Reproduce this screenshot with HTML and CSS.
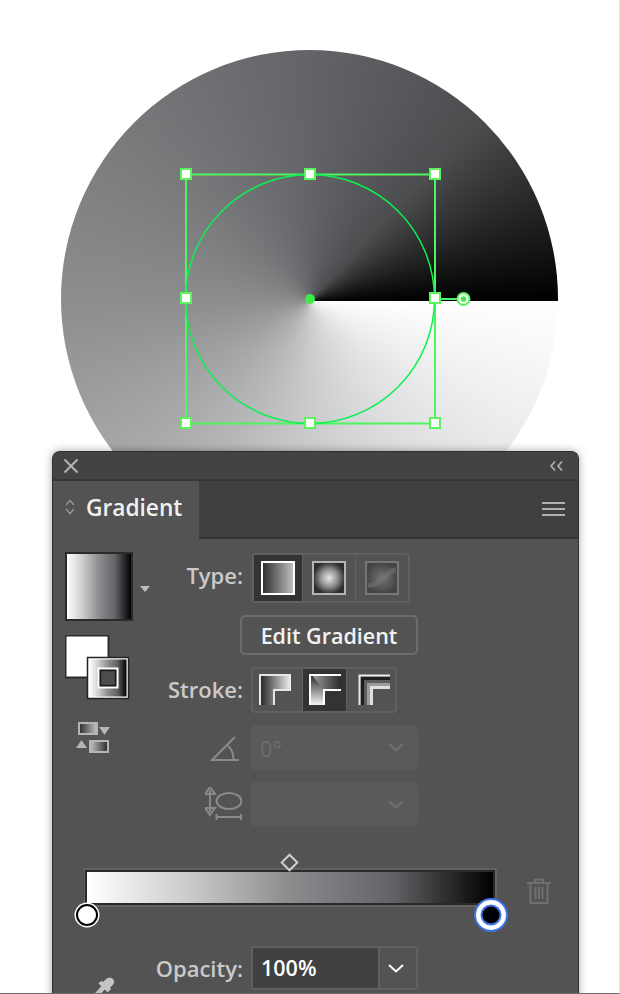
FILE: index.html
```html
<!DOCTYPE html>
<html lang="en">
<head>
  <meta charset="UTF-8" />
  <title>Gradient panel</title>
  <link rel="stylesheet" href="styles.css">
</head>
<body>
<div class="page">

  <!-- Artwork with the selected circle -->
  <div class="artboard">
    <div class="disc"></div>
    <svg class="selection" width="620" height="451" viewBox="0 0 620 451">
      <rect x="186" y="174.500" width="249" height="249" fill="none" stroke="#4ff55f" stroke-width="2"/>
      <circle cx="310" cy="299" r="124.500" fill="none" stroke="#0cf050" stroke-width="1.500"/>
      <line x1="435" y1="299" x2="458" y2="299" stroke="#4ff55f" stroke-width="2"/>
      <g fill="#fff" stroke="#5cf35c" stroke-width="2">
        <rect x="181" y="169" width="10" height="10"/>
        <rect x="305" y="169" width="10" height="10"/>
        <rect x="430" y="169" width="10" height="10"/>
        <rect x="181" y="293" width="10" height="10"/>
        <rect x="430" y="293" width="10" height="10"/>
        <rect x="181" y="418" width="10" height="10"/>
        <rect x="305" y="418" width="10" height="10"/>
        <rect x="430" y="418" width="10" height="10"/>
        <circle cx="463.500" cy="299" r="6"/>
      </g>
      <circle cx="463.500" cy="299" r="2.800" fill="#3fea4a"/>
      <circle cx="310" cy="299" r="5" fill="#3fea4a"/>
    </svg>
  </div>

  <svg class="defs" width="0" height="0">
    <defs>
      <linearGradient id="ramp" x1="0" x2="1" y1="0" y2="0">
        <stop offset="0" stop-color="#fff"/>
        <stop offset=".25" stop-color="#c9cbcd"/>
        <stop offset=".5" stop-color="#8b8c8e"/>
        <stop offset=".75" stop-color="#636467"/>
        <stop offset="1" stop-color="#000"/>
      </linearGradient>
      <linearGradient id="typeLinear" x1="0" x2="1" y1="0" y2="0">
        <stop offset="0" stop-color="#2a2a2a"/>
        <stop offset="1" stop-color="#c4c4c4"/>
      </linearGradient>
      <linearGradient id="typeLinearBack" x1="1" x2="0" y1="0" y2="0">
        <stop offset="0" stop-color="#2a2a2a"/>
        <stop offset="1" stop-color="#c4c4c4"/>
      </linearGradient>
      <radialGradient id="typeRadial">
        <stop offset="0" stop-color="#e8e8e8"/>
        <stop offset=".55" stop-color="#8f8f8f"/>
        <stop offset="1" stop-color="#2e2e2e"/>
      </radialGradient>
      <radialGradient id="typeFree">
        <stop offset="0" stop-color="#747474"/>
        <stop offset="1" stop-color="#444"/>
      </radialGradient>
      <linearGradient id="acrossX" gradientUnits="userSpaceOnUse" x1="0" x2="32" y1="0" y2="0">
        <stop offset="0" stop-color="#1c1c1c"/>
        <stop offset="1" stop-color="#f2f2f2"/>
      </linearGradient>
      <linearGradient id="alongY" gradientUnits="userSpaceOnUse" x1="0" x2="0" y1="0" y2="31">
        <stop offset="0" stop-color="#222"/>
        <stop offset="1" stop-color="#f4f4f4"/>
      </linearGradient>
      <linearGradient id="alongX" gradientUnits="userSpaceOnUse" x1="4" x2="32" y1="0" y2="0">
        <stop offset="0" stop-color="#999"/>
        <stop offset="1" stop-color="#2a2a2a"/>
      </linearGradient>
    </defs>
  </svg>

  <section class="panel">
    <div class="titlebar">
      <svg class="icon-close" width="16" height="16" viewBox="0 0 16 16"><path d="M1.500 1.500 14.500 14.500M14.500 1.500 1.500 14.500"/></svg>
      <svg class="icon-collapse" width="13" height="10" viewBox="0 0 13 10"><path d="M5 .5 1 5l4 4.500M12 .5 8 5l4 4.500"/></svg>
    </div>

    <div class="tabrow">
      <div class="tab">
        <svg class="icon-updown" width="10" height="16" viewBox="0 0 10 16"><path d="M1 6 5 1.500 9 6M1 10l4 4.500L9 10"/></svg>
        <span>Gradient</span>
      </div>
      <div class="tabrow-rest">
        <svg class="icon-menu" width="23" height="16" viewBox="0 0 23 16"><path d="M0 2h23M0 8h23M0 14h23"/></svg>
      </div>
    </div>

    <div class="panel-body">
      <div class="tools">
        <div class="swatches">
          <div class="swatch-row">
            <div class="swatch"></div>
            <div class="caret"></div>
          </div>

          <svg class="fillstroke" width="65" height="65" viewBox="0 0 65 65">
            <rect x=".5" y=".5" width="43" height="42" fill="#fff" stroke="#2d2d2d" stroke-width="2"/>
            <rect x="22.500" y="22.500" width="41" height="41" fill="#fff" stroke="#222" stroke-width="1.500"/>
            <rect x="24.500" y="24.500" width="37" height="37" fill="url(#ramp)"/>
            <rect x="33.500" y="33.500" width="19" height="19" fill="#4d4d4d" stroke="#fff" stroke-width="2"/>
            <rect x="35.500" y="35.500" width="15" height="15" fill="#4d4d4d" stroke="#1c1c1c" stroke-width="1.500"/>
          </svg>

          <svg class="swap" width="35" height="32" viewBox="0 0 35 32">
            <rect x="3" y="1" width="18" height="11" fill="url(#typeLinear)" stroke="#b5b5b5" stroke-width="2"/>
            <rect x="14" y="19" width="18" height="11" fill="url(#typeLinearBack)" stroke="#b5b5b5" stroke-width="2"/>
            <path d="M23 5h11l-5.500 8zM0 26l5.500-8 5.500 8z" fill="#b5b5b5"/>
          </svg>
        </div>

        <div class="controls">
          <label class="field-label type-label">Type:</label>
          <div class="btn-group type-group">
            <div class="cell active">
              <svg width="34" height="34" viewBox="0 0 34 34"><rect x="1" y="1" width="32" height="32" fill="url(#typeLinear)" stroke="#fff" stroke-width="2"/></svg>
            </div>
            <div class="cell">
              <svg width="34" height="34" viewBox="0 0 34 34"><rect x="1" y="1" width="32" height="32" fill="url(#typeRadial)" stroke="#b4b4b4" stroke-width="2"/></svg>
            </div>
            <div class="cell">
              <svg width="34" height="34" viewBox="0 0 34 34">
                <rect x="1" y="1" width="32" height="32" fill="url(#typeFree)" stroke="#777" stroke-width="2"/>
                <path d="M3 24C10 26 13 19 18 17 23 15 24 9 31 9" fill="none" stroke="#7c7c7c" stroke-width="5" opacity=".45"/>
              </svg>
            </div>
          </div>

          <span></span>
          <button class="edit-btn" type="button">Edit Gradient</button>

          <label class="field-label stroke-label">Stroke:</label>
          <div class="btn-group stroke-group">
            <div class="cell">
              <svg width="32" height="32" viewBox="0 0 32 32">
                <path d="M0 0H32V16H15V31H0Z" fill="url(#acrossX)"/>
                <path d="M1 31V1H32M15 31V16H32" fill="none" stroke="#e6e6e6" stroke-width="2"/>
              </svg>
            </div>
            <div class="cell active">
              <svg width="32" height="32" viewBox="0 0 32 32">
                <path d="M0 0H15V31H0Z" fill="url(#alongY)"/>
                <path d="M2 0H32V16H15Z" fill="url(#alongX)"/>
                <path d="M1 31V1H32M15 31V16H32" fill="none" stroke="#fff" stroke-width="2"/>
              </svg>
            </div>
            <div class="cell">
              <svg width="32" height="32" viewBox="0 0 32 32" fill="none" stroke-width="3">
                <path d="M1.500 31V1.500H32" stroke="#e8e8e8" stroke-width="2"/>
                <path d="M4.500 31V4.500H32" stroke="#1d1d1d"/>
                <path d="M7.500 31V7.500H32" stroke="#5c5c5c"/>
                <path d="M10.500 31V10.500H32" stroke="#9c9c9c"/>
                <path d="M13.500 31V13.500H32" stroke="#dedede"/>
              </svg>
            </div>
          </div>

          <svg class="field-icon" width="32" height="26" viewBox="0 0 32 26">
            <path d="M29 25H2L25 2M18 11C22 14 23.500 19 23.500 25"/>
          </svg>
          <div class="select angle-select">
            <span>0°</span>
            <svg width="16" height="9" viewBox="0 0 16 9"><path d="M1 1l7 6.500L15 1"/></svg>
          </div>

          <svg class="field-icon" width="37" height="34" viewBox="0 0 37 34">
            <path d="M5 3V25"/>
            <path d="M5 0l5 7H0zM5 28l5-7H0z" fill="#8a8a8a" stroke="none"/>
            <ellipse cx="24" cy="14" rx="12.500" ry="8"/>
            <path d="M11.500 27v6M36 27v6M11.500 30H36"/>
          </svg>
          <div class="select aspect-select">
            <span></span>
            <svg width="16" height="9" viewBox="0 0 16 9"><path d="M1 1l7 6.500L15 1"/></svg>
          </div>
        </div>
      </div>

      <!-- Gradient slider -->
      <div class="ramp-row">
        <div class="ramp-wrap">
          <div class="ramp"><div class="ramp-fill"></div></div>
          <div class="midpoint"></div>
          <div class="stop stop-white"></div>
          <div class="stop stop-black"></div>
        </div>
        <svg class="trash" width="24" height="26" viewBox="0 0 24 26">
          <path d="M0 5h24M8 5V1.500h8V5M3.500 5v20h17V5M8.500 9v12M12 9v12M15.500 9v12"/>
        </svg>
      </div>

      <div class="opacity-row">
        <svg class="eyedropper" width="28" height="28" viewBox="0 0 24 24">
          <path d="M2 22 13 10" fill="none" stroke="#c4c4c4" stroke-width="4"/>
          <path d="M8 7l8 8 3-3-1-1 2-2c2-2 2-4 .500-5.500S16 2 14 4l-2 2-1-1z" fill="#c4c4c4"/>
        </svg>
        <label class="field-label">Opacity:</label>
        <div class="opacity-box">
          <span class="opacity-value">100%</span>
          <div class="opacity-arrow">
            <svg width="16" height="9" viewBox="0 0 16 9"><path d="M1 1l7 6.500L15 1"/></svg>
          </div>
        </div>
      </div>
    </div>
  </section>

</div>
</body>
</html>
```

FILE: styles.css
```css
body {
  margin: 0;
  background-color: #fff;
  font-family: "Open Sans", Arial, sans-serif;
}
.page {
  position: relative;
  width: 620px;
  height: 994px;
  box-sizing: border-box;
  overflow: hidden;
  border-right: 1px solid #e2e2e2;
  border-bottom: 1px solid #6e6e6e;
}

/* artwork */
.artboard {
  position: relative;
  height: 451px;
}
.disc {
  position: absolute;
  left: 61px;
  top: 50px;
  width: 497px;
  height: 498px;
  border-radius: 50%;
  background: conic-gradient(from 90deg at 249px 251px, #fff 0, #c9cbcd 25%, #8c8d8f 50%, #78797b 62%, #636467 75%, #4c4d4f 87%, #000 100%);
}
.selection {
  position: absolute;
  left: 0;
  top: 0;
}
.defs {
  display: block;
  height: 0;
}

/* panel */
.panel {
  position: relative;
  width: 527px;
  height: 560px;
  margin-left: 52px;
  box-sizing: border-box;
  background-color: #535353;
  border: 1px solid #2e2e2e;
  border-bottom: none;
  border-radius: 8px 8px 0 0;
  box-shadow: 0 0 8px rgba(0,0,0,0.35);
}
.titlebar {
  display: flex;
  justify-content: space-between;
  align-items: center;
  height: 27px;
  padding: 0 15px 0 10px;
  background-color: #434343;
  border-bottom: 2px solid #363636;
  border-radius: 7px 7px 0 0;
}
.icon-close path, .icon-collapse path, .icon-updown path {
  fill: none;
  stroke: #b4b4b4;
  stroke-width: 2;
}
.icon-updown path {
  stroke: #9a9a9a;
  stroke-width: 1.2;
}
.icon-collapse path {
  stroke-width: 1.6;
}
.tabrow {
  display: flex;
  height: 58px;
}
.tab {
  display: flex;
  align-items: center;
  gap: 11px;
  width: 146px;
  box-sizing: border-box;
  padding: 0 0 6px 12px;
  color: #f0f0f0;
  font-size: 22.7px;
  font-weight: 600;
}
.tabrow-rest {
  flex: 1;
  display: flex;
  justify-content: flex-end;
  align-items: center;
  padding-right: 13px;
  background-color: #404040;
  border-bottom: 2px solid #353535;
}
.icon-menu path {
  fill: none;
  stroke: #b0b0b0;
  stroke-width: 2;
}

.panel-body {
  padding: 13px 0 0 12px;
}
.tools {
  display: flex;
}
.swatches {
  width: 87px;
  flex: none;
}
.swatch-row {
  display: flex;
  align-items: center;
  gap: 7px;
}
.swatch {
  width: 68px;
  height: 69px;
  box-sizing: border-box;
  border: 2px solid #2b2b2b;
  background: linear-gradient(to right, #fff, #c9cbcd 25%, #8b8c8e 50%, #636467 75%, #000);
}
.caret {
  width: 0;
  height: 0;
  margin-top: 4px;
  border-left: 5px solid transparent;
  border-right: 5px solid transparent;
  border-top: 6px solid #bdbdbd;
}
.fillstroke {
  display: block;
  margin-top: 14px;
}
.swap {
  display: block;
  margin: 22px 0 0 11px;
}

.controls {
  display: grid;
  grid-template-columns: 91px 167px;
  column-gap: 8px;
  row-gap: 12px;
  align-items: center;
}
.field-label {
  justify-self: end;
  color: #cacaca;
  font-size: 22px;
  font-weight: 600;
}
.type-label {
  margin-bottom: 6px;
}
.stroke-label {
  margin-bottom: 2px;
}
.field-icon {
  justify-self: end;
  margin-right: 1px;
}
.field-icon path, .field-icon ellipse {
  fill: none;
  stroke: #8a8a8a;
  stroke-width: 2;
}
.btn-group {
  display: flex;
  box-sizing: border-box;
  border: 2px solid #606060;
  border-radius: 4px;
}
.type-group {
  width: 158px;
  height: 50px;
  margin: 1px 0 0 1px;
}
.type-group .cell:first-child {
  flex: none;
  width: 48px;
}
.stroke-group {
  width: 146px;
  height: 46px;
}
.stroke-group .cell:first-child {
  padding-right: 6px;
}
.stroke-group .cell:last-child {
  padding-left: 5px;
}
.cell {
  flex: 1;
  display: flex;
  align-items: center;
  justify-content: center;
  border-left: 1px solid #606060;
}
.cell:first-child {
  border-left: none;
}
.cell.active {
  background-color: #333;
}
.edit-btn {
  width: 178px;
  height: 40px;
  margin-left: -11px;
  padding: 0;
  background: none;
  border: 2px solid #6c6c6c;
  border-radius: 5px;
  color: #f2f2f2;
  font-family: inherit;
  font-size: 21.5px;
  font-weight: 600;
}
.select {
  display: flex;
  align-items: center;
  justify-content: space-between;
  box-sizing: border-box;
  padding: 0 14px 0 9px;
  background-color: #5a5a5a;
  border-radius: 4px;
  color: #6e6e6e;
  font-size: 22px;
}
.select svg path {
  fill: none;
  stroke: #727272;
  stroke-width: 2;
}
.angle-select {
  height: 45px;
}
.aspect-select {
  height: 44px;
}

/* slider */
.ramp-row {
  display: flex;
  align-items: flex-start;
  gap: 30px;
  margin: 42px 0 0 19px;
}
.ramp-wrap {
  position: relative;
  width: 413px;
  height: 39px;
}
.ramp {
  height: 100%;
  box-sizing: border-box;
  border: 2px solid #616161;
  border-left-width: 1px;
}
.ramp-fill {
  height: 100%;
  box-sizing: border-box;
  border: 2px solid #2a2a2a;
  background: linear-gradient(to right, #fff, #c9cbcd 25%, #8b8c8e 50%, #636467 75%, #000);
}
.midpoint {
  position: absolute;
  left: 199px;
  top: -12px;
  width: 9px;
  height: 9px;
  border: 2px solid #cfcfcf;
  transform: rotate(45deg);
}
.stop {
  position: absolute;
  top: 47px;
  border-radius: 50%;
  transform: translate(-50%, -50%);
}
.stop-white {
  left: 3px;
  width: 18px;
  height: 18px;
  background-color: #fff;
  box-shadow: 0 0 0 2px #000, 0 0 0 3.5px #fff;
}
.stop-black {
  left: 407px;
  width: 17px;
  height: 17px;
  background-color: #000;
  box-shadow: 0 0 0 2px #3f74e8, 0 0 0 6.5px #fff, 0 0 0 8.5px #3f74e8;
}
.trash {
  margin-top: 10px;
}
.trash path {
  fill: none;
  stroke: #707070;
  stroke-width: 2;
}

.opacity-row {
  display: grid;
  grid-template-columns: 87px 91px 175px;
  margin-top: 39px;
}
.eyedropper {
  margin: 29px 0 0 24px;
}
.opacity-row .field-label {
  line-height: 44px;
  height: 44px;
}
.opacity-box {
  display: flex;
  height: 44px;
  margin-left: 8px;
  box-sizing: border-box;
  border: 2px solid #606060;
  border-radius: 4px;
}
.opacity-value {
  width: 125px;
  box-sizing: border-box;
  padding-left: 8px;
  background-color: #404040;
  color: #fff;
  font-size: 21.5px;
  font-weight: 600;
  line-height: 40px;
}
.opacity-arrow {
  flex: 1;
  display: flex;
  align-items: center;
  justify-content: center;
  padding-right: 4px;
  border-left: 2px solid #606060;
}
.opacity-arrow path {
  fill: none;
  stroke: #fff;
  stroke-width: 2;
}
```
